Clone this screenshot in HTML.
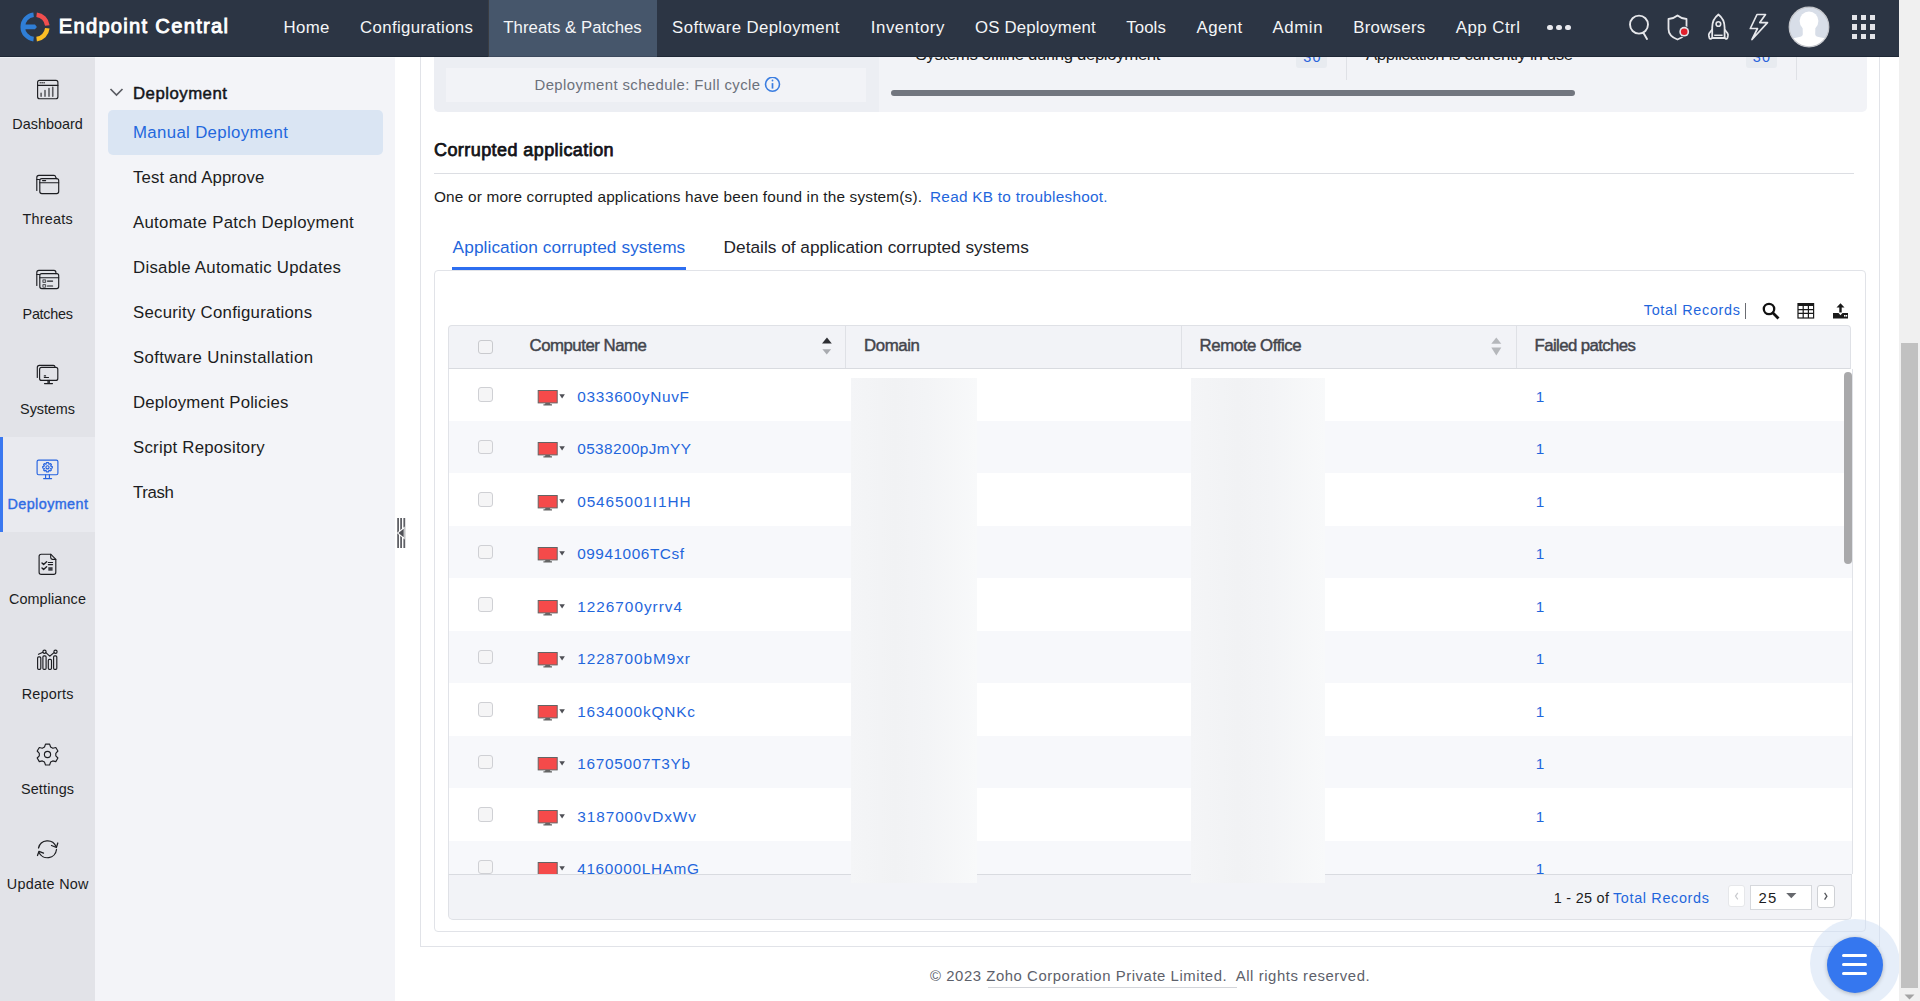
<!DOCTYPE html>
<html><head><meta charset="utf-8"><title>Endpoint Central</title>
<style>
html,body{margin:0;padding:0;width:1920px;height:1001px;overflow:hidden;background:#fff;}
body{position:relative;font-family:"Liberation Sans",sans-serif;}
div{position:absolute;box-sizing:border-box;}
.t{white-space:nowrap;}
</style></head><body>
<div style="left:0px;top:57px;width:95px;height:944px;background:#e2e3e8;"></div>
<div style="left:0px;top:57px;width:95px;height:1px;background:#eceef2;"></div>
<div style="left:0px;top:437px;width:95px;height:95px;background:#e9eaef;"></div>
<div style="left:0px;top:437px;width:3px;height:95px;background:#3a78f0;"></div>
<div class="t" style="left:12.30px;top:117.00px;font-size:14.4px;line-height:14.4px;font-weight:normal;color:#1b1c21;letter-spacing:0.019px;">Dashboard</div>
<div class="t" style="left:22.60px;top:212.00px;font-size:14.4px;line-height:14.4px;font-weight:normal;color:#1b1c21;letter-spacing:0.200px;">Threats</div>
<div class="t" style="left:22.60px;top:307.00px;font-size:14.4px;line-height:14.4px;font-weight:normal;color:#1b1c21;letter-spacing:-0.292px;">Patches</div>
<div class="t" style="left:20.10px;top:402.00px;font-size:14.4px;line-height:14.4px;font-weight:normal;color:#1b1c21;letter-spacing:-0.067px;">Systems</div>
<div class="t" style="left:7.50px;top:497.00px;font-size:14.4px;line-height:14.4px;font-weight:normal;color:#2f6ce4;letter-spacing:0.406px;-webkit-text-stroke:0.4px #2f6ce4;">Deployment</div>
<div class="t" style="left:8.90px;top:592.00px;font-size:14.4px;line-height:14.4px;font-weight:normal;color:#1b1c21;letter-spacing:0.117px;">Compliance</div>
<div class="t" style="left:21.70px;top:687.00px;font-size:14.4px;line-height:14.4px;font-weight:normal;color:#1b1c21;letter-spacing:0.217px;">Reports</div>
<div class="t" style="left:20.90px;top:782.00px;font-size:14.4px;line-height:14.4px;font-weight:normal;color:#1b1c21;letter-spacing:0.164px;">Settings</div>
<div class="t" style="left:6.80px;top:877.00px;font-size:14.4px;line-height:14.4px;font-weight:normal;color:#1b1c21;letter-spacing:0.278px;">Update Now</div>
<svg style="position:absolute;left:32px;top:75px;" width="31" height="28" viewBox="0 0 31 28"><g fill="none" stroke="#1d1e22" stroke-width="1.15" stroke-linecap="round" stroke-linejoin="round"><rect x="5.6" y="5.4" width="20.3" height="18.3" rx="2"/><path d="M5.6 10.3 H25.9"/>
<path d="M8 7.8 H9.3 M10.4 7.8 H11 M12 7.8 H12.6" stroke-width="1"/>
<path d="M9.1 21.2 V18.3 M13 21.2 V15.5 M17 21.2 V13.5 M20.75 21.2 V12.4" stroke="#5c5d62" stroke-width="1.6"/></g></svg>
<svg style="position:absolute;left:32px;top:170px;" width="31" height="28" viewBox="0 0 31 28"><g fill="none" stroke="#1d1e22" stroke-width="1.15" stroke-linecap="round" stroke-linejoin="round"><path d="M4.8 20.5 V7.5 Q4.8 5.4 6.9 5.4 H22 Q23.3 5.4 23.8 7.3 L24.3 8.6"/>
<path d="M4.8 9.5 H7.5"/>
<rect x="7.8" y="8.6" width="18.9" height="15" rx="2"/><path d="M7.8 12.7 H26.7"/><path d="M10.6 10.6 H13.6" stroke-width="1.2"/></g></svg>
<svg style="position:absolute;left:32px;top:265px;" width="31" height="28" viewBox="0 0 31 28"><g fill="none" stroke="#1d1e22" stroke-width="1.15" stroke-linecap="round" stroke-linejoin="round"><path d="M4.8 20.5 V7.5 Q4.8 5.4 6.9 5.4 H22 Q23.9 5.4 23.9 7.5 V8.6"/>
<path d="M4.8 9.5 H7.5"/>
<rect x="7.8" y="8.6" width="18.9" height="15" rx="2"/><path d="M7.8 12.7 H26.7"/>
<rect x="10.9" y="14.8" width="2.7" height="2.6" rx="0.5" stroke="#5c5d62"/><rect x="10.9" y="19.6" width="2.7" height="2.6" rx="0.5" stroke="#5c5d62"/>
<path d="M15.5 16.1 H20.6 M15.5 21 H20.6"/></g></svg>
<svg style="position:absolute;left:32px;top:360px;" width="31" height="28" viewBox="0 0 31 28"><g fill="none" stroke="#1d1e22" stroke-width="1.15" stroke-linecap="round" stroke-linejoin="round"><path d="M5.3 17.5 V7.4 Q5.3 5.3 7.4 5.3 H21.4 Q22.9 5.3 23 7"/>
<rect x="7.6" y="7.4" width="18.2" height="13" rx="2"/>
<path d="M12.3 15.9 H13.6 M12.3 17.5 H16.5"/>
<path d="M16 20.4 V23.3 M17.3 20.4 V23.3 M12.5 23.6 H20.5" /></g></svg>
<svg style="position:absolute;left:32px;top:455px;" width="31" height="28" viewBox="0 0 31 28"><g fill="none" stroke="#2563e0" stroke-width="1.15" stroke-linecap="round" stroke-linejoin="round"><rect x="5.1" y="5.1" width="20.8" height="14.6" rx="1.5"/>
<path d="M13.6 19.7 V23.5 M17.4 19.7 V23.5 M11.6 23.6 H19.6"/>
<path d="M15.5 7.6 L16.6 7.6 L17 9.3 L18.6 8.6 L19.4 9.5 L18.6 11 L20.3 11.6 L20.3 13 L18.6 13.5 L19.4 15.1 L18.5 15.9 L17 15.2 L16.6 16.9 L14.4 16.9 L14 15.2 L12.4 15.9 L11.6 15.1 L12.4 13.5 L10.7 13 L10.7 11.6 L12.4 11 L11.6 9.5 L12.4 8.6 L14 9.3 L14.4 7.6 Z"/>
<circle cx="15.5" cy="12.3" r="1.6"/></g></svg>
<svg style="position:absolute;left:32px;top:550px;" width="31" height="28" viewBox="0 0 31 28"><g fill="none" stroke="#1d1e22" stroke-width="1.15" stroke-linecap="round" stroke-linejoin="round"><path d="M9.2 4.2 H18.7 L23.8 9.3 V22.2 Q23.8 24.3 21.7 24.3 H9.2 Q7.1 24.3 7.1 22.2 V6.3 Q7.1 4.2 9.2 4.2 Z"/>
<path d="M18.7 4.2 V7.6 Q18.7 9.3 20.4 9.3 H23.8"/>
<path d="M10 13 L11.6 14.5 L14.6 11.8 M10 18 L11.6 19.5 L14.6 16.8" stroke-width="1.4"/>
<path d="M16.3 12.5 H20.6 M16.3 14.6 H20.6" stroke-width="1.1"/>
<rect x="16.3" y="17.2" width="4.3" height="3.5" fill="#3d3e44" stroke="none"/></g></svg>
<svg style="position:absolute;left:32px;top:645px;" width="31" height="28" viewBox="0 0 31 28"><g fill="none" stroke="#1d1e22" stroke-width="1.15" stroke-linecap="round" stroke-linejoin="round"><rect x="5.6" y="11.8" width="3.2" height="12.5" rx="1.1"/><rect x="10.9" y="10.8" width="3.2" height="13.5" rx="1.1"/>
<rect x="16.3" y="14.4" width="3.2" height="9.9" rx="1.1"/><rect x="21.6" y="10.8" width="3.2" height="13.5" rx="1.1"/>
<path d="M6.5 9.3 L10.9 7.3 M13.9 7.7 L17.7 11.2 L22 7.6"/>
<circle cx="12.5" cy="6.7" r="1.6"/><circle cx="23.5" cy="6.7" r="1.6"/></g></svg>
<svg style="position:absolute;left:32px;top:740px;" width="31" height="28" viewBox="0 0 31 28"><g fill="none" stroke="#1d1e22" stroke-width="1.15" stroke-linecap="round" stroke-linejoin="round"><path d="M13.5 4.1 H17.6 L18.6 7 L20.8 8.2 L23.8 7.5 L25.9 11 L23.8 13.3 V15.8 L25.9 18 L23.8 21.6 L20.8 20.9 L18.6 22.1 L17.6 25 H13.5 L12.5 22.1 L10.3 20.9 L7.3 21.6 L5.2 18 L7.3 15.8 V13.3 L5.2 11 L7.3 7.5 L10.3 8.2 L12.5 7 Z"/>
<circle cx="15.5" cy="14.5" r="3.1"/></g></svg>
<svg style="position:absolute;left:32px;top:835px;" width="31" height="28" viewBox="0 0 31 28"><g fill="none" stroke="#1d1e22" stroke-width="1.15" stroke-linecap="round" stroke-linejoin="round"><path d="M6.5 13 A9.2 9.2 0 0 1 24 11.6" stroke-width="1.25"/><path d="M24.5 14.5 A9.2 9.2 0 0 1 7 17.4" stroke-width="1.25"/>
<path d="M19.5 10.5 L24.4 12.5 L25.8 8" stroke-width="1.25"/><path d="M11.5 18.2 L7 16.3 L5.5 20.5" stroke-width="1.25"/></g></svg>
<div style="left:95px;top:57px;width:300px;height:944px;background:#f3f4f8;"></div>
<div style="left:95px;top:57px;width:300px;height:1px;background:#fafbfc;"></div>
<svg style="position:absolute;left:108px;top:86px;" width="18" height="12" viewBox="0 0 18 12"><path d="M2.5 3 L8.5 9 L14.5 3" fill="none" stroke="#5a5c63" stroke-width="1.7"/></svg>
<div class="t" style="left:133.00px;top:86.00px;font-size:16.8px;line-height:16.8px;font-weight:normal;color:#15161a;letter-spacing:0.483px;-webkit-text-stroke:0.5px #15161a;">Deployment</div>
<div style="left:108px;top:110px;width:275px;height:45px;background:#dae5f3;border-radius:5px;"></div>
<div class="t" style="left:133.00px;top:125.00px;font-size:16.8px;line-height:16.8px;font-weight:normal;color:#2468dd;letter-spacing:0.350px;">Manual Deployment</div>
<div class="t" style="left:133.00px;top:170.00px;font-size:16.8px;line-height:16.8px;font-weight:normal;color:#1b1c21;letter-spacing:0.110px;">Test and Approve</div>
<div class="t" style="left:133.00px;top:215.00px;font-size:16.8px;line-height:16.8px;font-weight:normal;color:#1b1c21;letter-spacing:0.298px;">Automate Patch Deployment</div>
<div class="t" style="left:133.00px;top:260.00px;font-size:16.8px;line-height:16.8px;font-weight:normal;color:#1b1c21;letter-spacing:0.271px;">Disable Automatic Updates</div>
<div class="t" style="left:133.00px;top:305.00px;font-size:16.8px;line-height:16.8px;font-weight:normal;color:#1b1c21;letter-spacing:0.255px;">Security Configurations</div>
<div class="t" style="left:133.00px;top:350.00px;font-size:16.8px;line-height:16.8px;font-weight:normal;color:#1b1c21;letter-spacing:0.380px;">Software Uninstallation</div>
<div class="t" style="left:133.00px;top:395.00px;font-size:16.8px;line-height:16.8px;font-weight:normal;color:#1b1c21;letter-spacing:0.189px;">Deployment Policies</div>
<div class="t" style="left:133.00px;top:440.00px;font-size:16.8px;line-height:16.8px;font-weight:normal;color:#1b1c21;letter-spacing:0.244px;">Script Repository</div>
<div class="t" style="left:133.00px;top:485.00px;font-size:16.8px;line-height:16.8px;font-weight:normal;color:#1b1c21;letter-spacing:-0.350px;">Trash</div>
<div style="left:395px;top:57px;width:1504px;height:944px;background:#ffffff;"></div>
<svg style="position:absolute;left:395px;top:515px;" width="14" height="36" viewBox="0 0 14 36"><rect x="2.2" y="3" width="1.8" height="30" fill="#5f6066"/><rect x="5.2" y="3" width="1.8" height="30" fill="#5f6066"/><rect x="8.4" y="3" width="1.8" height="30" fill="#5f6066"/>
<path d="M1.8 18 L9.6 11.5 V24.5 Z" fill="#ffffff"/><path d="M3.4 18 L8.7 13.8 V22.2 Z" fill="#505157"/></svg>
<div style="left:420px;top:57px;width:1px;height:890px;background:#e1e3e8;"></div>
<div style="left:1879px;top:57px;width:1px;height:890px;background:#e1e3e8;"></div>
<div style="left:420px;top:946px;width:1460px;height:1px;background:#e1e3e8;"></div>
<div style="left:434px;top:57px;width:1432.5px;height:54.5px;background:#f2f3f7;border-radius:0 0 5px 5px;"></div>
<div style="left:434px;top:57px;width:445px;height:54.5px;background:#eceef3;border-radius:0 0 0 5px;"></div>
<div style="left:446px;top:67.8px;width:420px;height:34.7px;background:#f2f3f7;"></div>
<div class="t" style="left:534.50px;top:78.00px;font-size:14.88px;line-height:14.88px;font-weight:normal;color:#6c717b;letter-spacing:0.405px;">Deployment schedule: Full cycle</div>
<svg style="position:absolute;left:763px;top:77px;" width="18" height="16" viewBox="0 0 18 16"><circle cx="9.5" cy="7.3" r="7" fill="none" stroke="#3a7de0" stroke-width="1.6"/><path d="M9.5 6.1 V11.6" stroke="#3a7de0" stroke-width="1.7"/><circle cx="9.5" cy="3.5" r="0.9" fill="#3a7de0"/></svg>
<div style="left:1296px;top:50px;width:31px;height:17.5px;background:#e8ebf0;border-radius:3px;"></div>
<div style="left:1745.8px;top:50px;width:31px;height:17.5px;background:#e8ebf0;border-radius:3px;"></div>
<div style="left:1346px;top:57px;width:1px;height:23px;background:#dfe1e6;"></div>
<div style="left:1796px;top:57px;width:1px;height:23px;background:#dfe1e6;"></div>
<div style="left:890.6px;top:89.8px;width:684.2px;height:6.2px;background:#72767f;border-radius:3.1px;"></div>
<div class="t" style="left:915.60px;top:47.00px;font-size:16.8px;line-height:16.8px;font-weight:normal;color:#1b1c21;letter-spacing:-0.353px;">Systems offline during deployment</div>
<div class="t" style="left:1303.20px;top:50.00px;font-size:14.4px;line-height:14.4px;font-weight:normal;color:#2a64dc;letter-spacing:1.200px;">30</div>
<div class="t" style="left:1366.00px;top:47.00px;font-size:16.8px;line-height:16.8px;font-weight:normal;color:#1b1c21;letter-spacing:-0.340px;">Application is currently in use</div>
<div class="t" style="left:1752.80px;top:50.00px;font-size:14.4px;line-height:14.4px;font-weight:normal;color:#2a64dc;letter-spacing:1.200px;">30</div>
<div class="t" style="left:434.00px;top:141.00px;font-size:18.0px;line-height:18.0px;font-weight:normal;color:#121317;letter-spacing:0.425px;-webkit-text-stroke:0.75px #121317;">Corrupted application</div>
<div style="left:434px;top:173px;width:1420px;height:1.2px;background:#dcdee3;"></div>
<div class="t" style="left:434.00px;top:189.00px;font-size:15.36px;line-height:15.36px;font-weight:normal;color:#1b1c21;letter-spacing:0.173px;">One or more corrupted applications have been found in the system(s).</div>
<div class="t" style="left:930.00px;top:189.00px;font-size:15.36px;line-height:15.36px;font-weight:normal;color:#1f66dc;letter-spacing:0.260px;">Read KB to troubleshoot.</div>
<div class="t" style="left:452.60px;top:239.00px;font-size:17.28px;line-height:17.28px;font-weight:normal;color:#1f66dc;letter-spacing:0.083px;">Application corrupted systems</div>
<div class="t" style="left:723.60px;top:239.00px;font-size:17.28px;line-height:17.28px;font-weight:normal;color:#222328;letter-spacing:0.000px;">Details of application corrupted systems</div>
<div style="left:434px;top:269.8px;width:1432px;height:662.7px;border:1px solid #e1e3e8;border-radius:4px;background:#fff"></div>
<div style="left:452px;top:267.2px;width:234px;height:2.8px;background:#2d6ef0;"></div>
<div class="t" style="left:1643.75px;top:303.00px;font-size:14.4px;line-height:14.4px;font-weight:normal;color:#1f66dc;letter-spacing:0.683px;">Total Records</div>
<div style="left:1745px;top:303px;width:1.3px;height:15.5px;background:#6a6c72;"></div>
<svg style="position:absolute;left:1758px;top:298px;" width="96" height="24" viewBox="0 0 96 24">
<circle cx="11" cy="11" r="5.2" fill="none" stroke="#111" stroke-width="2.3"/>
<path d="M15 15 L19.5 19.5" stroke="#111" stroke-width="2.8" stroke-linecap="square"/>
<rect x="40" y="5.6" width="15.6" height="14.4" fill="none" stroke="#1a1a1a" stroke-width="1.2"/>
<rect x="40" y="5" width="15.6" height="3" fill="#1a1a1a"/>
<path d="M40 11.7 H55.6 M40 15.3 H55.6 M45.2 5 V20 M50.4 5 V20" stroke="#1a1a1a" stroke-width="1.2"/>
<path d="M82.5 5.3 L78.5 9.5 H81.3 V14.4 H83.7 V9.5 H86.5 Z" fill="#1a1a1a"/>
<path d="M75 15 H80.5 L82.5 17.3 L84.5 15 H90 V20.4 H75 Z" fill="#1a1a1a"/>
<rect x="86" y="17" width="1.6" height="1.6" fill="#fff"/><rect x="88" y="17" width="1.2" height="1.6" fill="#fff"/>
</svg>
<div style="left:447.5px;top:325px;width:1403.5px;height:43.5px;background:#f2f3f7;border:1px solid #dfe1e6;border-bottom:1px solid #d9dbe0;border-radius:4px 4px 0 0"></div>
<div style="left:845px;top:326px;width:1px;height:42px;background:#dfe1e6;"></div>
<div style="left:1180.5px;top:326px;width:1px;height:42px;background:#dfe1e6;"></div>
<div style="left:1515.5px;top:326px;width:1px;height:42px;background:#dfe1e6;"></div>
<div style="left:478px;top:339.5px;width:14.6px;height:14.8px;border:1px solid #c9cace;border-radius:3px;background:#f4f4f6"></div>
<div class="t" style="left:529.50px;top:338.00px;font-size:16.8px;line-height:16.8px;font-weight:normal;color:#43454c;letter-spacing:-0.479px;-webkit-text-stroke:0.45px #43454c;">Computer Name</div>
<div class="t" style="left:864.00px;top:338.00px;font-size:16.8px;line-height:16.8px;font-weight:normal;color:#43454c;letter-spacing:-0.380px;-webkit-text-stroke:0.45px #43454c;">Domain</div>
<div class="t" style="left:1199.50px;top:338.00px;font-size:16.8px;line-height:16.8px;font-weight:normal;color:#43454c;letter-spacing:-0.400px;-webkit-text-stroke:0.45px #43454c;">Remote Office</div>
<div class="t" style="left:1534.50px;top:338.00px;font-size:16.8px;line-height:16.8px;font-weight:normal;color:#43454c;letter-spacing:-0.596px;-webkit-text-stroke:0.45px #43454c;">Failed patches</div>
<svg style="position:absolute;left:820px;top:336px;" width="14" height="20" viewBox="0 0 14 20"><path d="M6.95 1.6 L11.8 7.4 H2 Z" fill="#2d2e33"/><path d="M2.4 13.3 H11.1 L6.75 18.5 Z" fill="#a9abb0"/></svg>
<svg style="position:absolute;left:1489px;top:336px;" width="14" height="20" viewBox="0 0 14 20"><path d="M7.3 1.5 L12.3 7.8 H2.3 Z" fill="#b5b7bb"/><path d="M2.3 11.5 H12.3 L7.3 19.5 Z" fill="#b5b7bb"/></svg>
<div style="left:447.5px;top:368.5px;width:1405.5px;height:505.5px;overflow:hidden;border-left:1px solid #e1e3e8;border-right:1px solid #e1e3e8">
<div style="left:0;top:-0.5px;width:1404px;height:52.5px;background:#ffffff"></div>
<div style="left:29.5px;top:18.5px;width:14.6px;height:14.8px;border:1px solid #cfd0d4;border-radius:3px;background:#f5f5f6"></div>
<svg style="position:absolute;left:88.5px;top:21.0px" width="22" height="16" viewBox="0 0 22 16"><rect x="1.2" y="0.5" width="19" height="12.4" fill="#f54a4a" stroke="#646464" stroke-width="1"/><path d="M8.6 12.9 H12.8 L13.6 14.3 H15 V15.4 H6.4 V14.3 H7.8 Z" fill="#646464"/></svg>
<svg style="position:absolute;left:110.8px;top:25.0px" width="7" height="6" viewBox="0 0 7 6"><path d="M0.3 0.2 H5.9 L3.1 4.6 Z" fill="#4e4f55"/></svg>
<div style="left:0;top:52.0px;width:1404px;height:52.5px;background:#f7f8fb"></div>
<div style="left:29.5px;top:71.0px;width:14.6px;height:14.8px;border:1px solid #cfd0d4;border-radius:3px;background:#f5f5f6"></div>
<svg style="position:absolute;left:88.5px;top:73.5px" width="22" height="16" viewBox="0 0 22 16"><rect x="1.2" y="0.5" width="19" height="12.4" fill="#f54a4a" stroke="#646464" stroke-width="1"/><path d="M8.6 12.9 H12.8 L13.6 14.3 H15 V15.4 H6.4 V14.3 H7.8 Z" fill="#646464"/></svg>
<svg style="position:absolute;left:110.8px;top:77.5px" width="7" height="6" viewBox="0 0 7 6"><path d="M0.3 0.2 H5.9 L3.1 4.6 Z" fill="#4e4f55"/></svg>
<div style="left:0;top:104.5px;width:1404px;height:52.5px;background:#ffffff"></div>
<div style="left:29.5px;top:123.5px;width:14.6px;height:14.8px;border:1px solid #cfd0d4;border-radius:3px;background:#f5f5f6"></div>
<svg style="position:absolute;left:88.5px;top:126.0px" width="22" height="16" viewBox="0 0 22 16"><rect x="1.2" y="0.5" width="19" height="12.4" fill="#f54a4a" stroke="#646464" stroke-width="1"/><path d="M8.6 12.9 H12.8 L13.6 14.3 H15 V15.4 H6.4 V14.3 H7.8 Z" fill="#646464"/></svg>
<svg style="position:absolute;left:110.8px;top:130.0px" width="7" height="6" viewBox="0 0 7 6"><path d="M0.3 0.2 H5.9 L3.1 4.6 Z" fill="#4e4f55"/></svg>
<div style="left:0;top:157.0px;width:1404px;height:52.5px;background:#f7f8fb"></div>
<div style="left:29.5px;top:176.0px;width:14.6px;height:14.8px;border:1px solid #cfd0d4;border-radius:3px;background:#f5f5f6"></div>
<svg style="position:absolute;left:88.5px;top:178.5px" width="22" height="16" viewBox="0 0 22 16"><rect x="1.2" y="0.5" width="19" height="12.4" fill="#f54a4a" stroke="#646464" stroke-width="1"/><path d="M8.6 12.9 H12.8 L13.6 14.3 H15 V15.4 H6.4 V14.3 H7.8 Z" fill="#646464"/></svg>
<svg style="position:absolute;left:110.8px;top:182.5px" width="7" height="6" viewBox="0 0 7 6"><path d="M0.3 0.2 H5.9 L3.1 4.6 Z" fill="#4e4f55"/></svg>
<div style="left:0;top:209.5px;width:1404px;height:52.5px;background:#ffffff"></div>
<div style="left:29.5px;top:228.5px;width:14.6px;height:14.8px;border:1px solid #cfd0d4;border-radius:3px;background:#f5f5f6"></div>
<svg style="position:absolute;left:88.5px;top:231.0px" width="22" height="16" viewBox="0 0 22 16"><rect x="1.2" y="0.5" width="19" height="12.4" fill="#f54a4a" stroke="#646464" stroke-width="1"/><path d="M8.6 12.9 H12.8 L13.6 14.3 H15 V15.4 H6.4 V14.3 H7.8 Z" fill="#646464"/></svg>
<svg style="position:absolute;left:110.8px;top:235.0px" width="7" height="6" viewBox="0 0 7 6"><path d="M0.3 0.2 H5.9 L3.1 4.6 Z" fill="#4e4f55"/></svg>
<div style="left:0;top:262.0px;width:1404px;height:52.5px;background:#f7f8fb"></div>
<div style="left:29.5px;top:281.0px;width:14.6px;height:14.8px;border:1px solid #cfd0d4;border-radius:3px;background:#f5f5f6"></div>
<svg style="position:absolute;left:88.5px;top:283.5px" width="22" height="16" viewBox="0 0 22 16"><rect x="1.2" y="0.5" width="19" height="12.4" fill="#f54a4a" stroke="#646464" stroke-width="1"/><path d="M8.6 12.9 H12.8 L13.6 14.3 H15 V15.4 H6.4 V14.3 H7.8 Z" fill="#646464"/></svg>
<svg style="position:absolute;left:110.8px;top:287.5px" width="7" height="6" viewBox="0 0 7 6"><path d="M0.3 0.2 H5.9 L3.1 4.6 Z" fill="#4e4f55"/></svg>
<div style="left:0;top:314.5px;width:1404px;height:52.5px;background:#ffffff"></div>
<div style="left:29.5px;top:333.5px;width:14.6px;height:14.8px;border:1px solid #cfd0d4;border-radius:3px;background:#f5f5f6"></div>
<svg style="position:absolute;left:88.5px;top:336.0px" width="22" height="16" viewBox="0 0 22 16"><rect x="1.2" y="0.5" width="19" height="12.4" fill="#f54a4a" stroke="#646464" stroke-width="1"/><path d="M8.6 12.9 H12.8 L13.6 14.3 H15 V15.4 H6.4 V14.3 H7.8 Z" fill="#646464"/></svg>
<svg style="position:absolute;left:110.8px;top:340.0px" width="7" height="6" viewBox="0 0 7 6"><path d="M0.3 0.2 H5.9 L3.1 4.6 Z" fill="#4e4f55"/></svg>
<div style="left:0;top:367.0px;width:1404px;height:52.5px;background:#f7f8fb"></div>
<div style="left:29.5px;top:386.0px;width:14.6px;height:14.8px;border:1px solid #cfd0d4;border-radius:3px;background:#f5f5f6"></div>
<svg style="position:absolute;left:88.5px;top:388.5px" width="22" height="16" viewBox="0 0 22 16"><rect x="1.2" y="0.5" width="19" height="12.4" fill="#f54a4a" stroke="#646464" stroke-width="1"/><path d="M8.6 12.9 H12.8 L13.6 14.3 H15 V15.4 H6.4 V14.3 H7.8 Z" fill="#646464"/></svg>
<svg style="position:absolute;left:110.8px;top:392.5px" width="7" height="6" viewBox="0 0 7 6"><path d="M0.3 0.2 H5.9 L3.1 4.6 Z" fill="#4e4f55"/></svg>
<div style="left:0;top:419.5px;width:1404px;height:52.5px;background:#ffffff"></div>
<div style="left:29.5px;top:438.5px;width:14.6px;height:14.8px;border:1px solid #cfd0d4;border-radius:3px;background:#f5f5f6"></div>
<svg style="position:absolute;left:88.5px;top:441.0px" width="22" height="16" viewBox="0 0 22 16"><rect x="1.2" y="0.5" width="19" height="12.4" fill="#f54a4a" stroke="#646464" stroke-width="1"/><path d="M8.6 12.9 H12.8 L13.6 14.3 H15 V15.4 H6.4 V14.3 H7.8 Z" fill="#646464"/></svg>
<svg style="position:absolute;left:110.8px;top:445.0px" width="7" height="6" viewBox="0 0 7 6"><path d="M0.3 0.2 H5.9 L3.1 4.6 Z" fill="#4e4f55"/></svg>
<div style="left:0;top:472.0px;width:1404px;height:52.5px;background:#f7f8fb"></div>
<div style="left:29.5px;top:491.0px;width:14.6px;height:14.8px;border:1px solid #cfd0d4;border-radius:3px;background:#f5f5f6"></div>
<svg style="position:absolute;left:88.5px;top:493.5px" width="22" height="16" viewBox="0 0 22 16"><rect x="1.2" y="0.5" width="19" height="12.4" fill="#f54a4a" stroke="#646464" stroke-width="1"/><path d="M8.6 12.9 H12.8 L13.6 14.3 H15 V15.4 H6.4 V14.3 H7.8 Z" fill="#646464"/></svg>
<svg style="position:absolute;left:110.8px;top:497.5px" width="7" height="6" viewBox="0 0 7 6"><path d="M0.3 0.2 H5.9 L3.1 4.6 Z" fill="#4e4f55"/></svg>
</div>
<div class="t" style="left:577.20px;top:389.00px;font-size:15.36px;line-height:15.36px;font-weight:normal;color:#1f66dc;letter-spacing:0.694px;">0333600yNuvF</div>
<div class="t" style="left:1535.75px;top:389.00px;font-size:15.36px;line-height:15.36px;font-weight:normal;color:#1f66dc;letter-spacing:0.000px;">1</div>
<div class="t" style="left:577.20px;top:441.00px;font-size:15.36px;line-height:15.36px;font-weight:normal;color:#1f66dc;letter-spacing:0.407px;">0538200pJmYY</div>
<div class="t" style="left:1535.75px;top:441.00px;font-size:15.36px;line-height:15.36px;font-weight:normal;color:#1f66dc;letter-spacing:0.000px;">1</div>
<div class="t" style="left:577.20px;top:494.00px;font-size:15.36px;line-height:15.36px;font-weight:normal;color:#1f66dc;letter-spacing:0.908px;">05465001I1HH</div>
<div class="t" style="left:1535.75px;top:494.00px;font-size:15.36px;line-height:15.36px;font-weight:normal;color:#1f66dc;letter-spacing:0.000px;">1</div>
<div class="t" style="left:577.20px;top:546.00px;font-size:15.36px;line-height:15.36px;font-weight:normal;color:#1f66dc;letter-spacing:0.544px;">09941006TCsf</div>
<div class="t" style="left:1535.75px;top:546.00px;font-size:15.36px;line-height:15.36px;font-weight:normal;color:#1f66dc;letter-spacing:0.000px;">1</div>
<div class="t" style="left:577.20px;top:599.00px;font-size:15.36px;line-height:15.36px;font-weight:normal;color:#1f66dc;letter-spacing:0.990px;">1226700yrrv4</div>
<div class="t" style="left:1535.75px;top:599.00px;font-size:15.36px;line-height:15.36px;font-weight:normal;color:#1f66dc;letter-spacing:0.000px;">1</div>
<div class="t" style="left:577.20px;top:651.00px;font-size:15.36px;line-height:15.36px;font-weight:normal;color:#1f66dc;letter-spacing:0.939px;">1228700bM9xr</div>
<div class="t" style="left:1535.75px;top:651.00px;font-size:15.36px;line-height:15.36px;font-weight:normal;color:#1f66dc;letter-spacing:0.000px;">1</div>
<div class="t" style="left:577.20px;top:704.00px;font-size:15.36px;line-height:15.36px;font-weight:normal;color:#1f66dc;letter-spacing:0.853px;">1634000kQNKc</div>
<div class="t" style="left:1535.75px;top:704.00px;font-size:15.36px;line-height:15.36px;font-weight:normal;color:#1f66dc;letter-spacing:0.000px;">1</div>
<div class="t" style="left:577.20px;top:756.00px;font-size:15.36px;line-height:15.36px;font-weight:normal;color:#1f66dc;letter-spacing:0.703px;">16705007T3Yb</div>
<div class="t" style="left:1535.75px;top:756.00px;font-size:15.36px;line-height:15.36px;font-weight:normal;color:#1f66dc;letter-spacing:0.000px;">1</div>
<div class="t" style="left:577.20px;top:809.00px;font-size:15.36px;line-height:15.36px;font-weight:normal;color:#1f66dc;letter-spacing:0.944px;">3187000vDxWv</div>
<div class="t" style="left:1535.75px;top:809.00px;font-size:15.36px;line-height:15.36px;font-weight:normal;color:#1f66dc;letter-spacing:0.000px;">1</div>
<div class="t" style="left:577.20px;top:861.00px;font-size:15.36px;line-height:15.36px;font-weight:normal;color:#1f66dc;letter-spacing:0.671px;">4160000LHAmG</div>
<div class="t" style="left:1535.75px;top:861.00px;font-size:15.36px;line-height:15.36px;font-weight:normal;color:#1f66dc;letter-spacing:0.000px;">1</div>
<div style="left:1843.5px;top:372px;width:8.5px;height:191.5px;background:#a9a9ab;border-radius:4.25px;"></div>
<div style="left:447.5px;top:874px;width:1404.5px;height:45.5px;background:#f2f3f7;border:1px solid #dfe1e6;border-top:1px solid #d9dbe0;border-radius:0 0 5px 5px"></div>
<div class="t" style="left:1553.75px;top:891.00px;font-size:14.4px;line-height:14.4px;font-weight:normal;color:#1b1c21;letter-spacing:0.294px;">1 - 25 of</div>
<div class="t" style="left:1613.00px;top:891.00px;font-size:14.4px;line-height:14.4px;font-weight:normal;color:#1f66dc;letter-spacing:0.663px;">Total Records</div>
<div style="left:1727.5px;top:885.3px;width:17.2px;height:22.2px;border:1px solid #e6e7ea;border-radius:3px;background:#fff"></div>
<div style="left:1750.4px;top:884.6px;width:61.2px;height:25.2px;border:1px solid #d6d8dc;background:#fff"></div>
<div class="t" style="left:1758.40px;top:891.00px;font-size:14.88px;line-height:14.88px;font-weight:normal;color:#1b1c21;letter-spacing:1.372px;">25</div>
<svg style="position:absolute;left:1785px;top:892px;" width="13" height="8" viewBox="0 0 13 8"><path d="M1.2 1 H11.4 L6.3 6.2 Z" fill="#66686d"/></svg>
<div style="left:1817.3px;top:885.3px;width:17.4px;height:22.4px;border:1px solid #cfd1d5;border-radius:3px;background:#fff"></div>
<svg style="position:absolute;left:1727.5px;top:885.3px;" width="17.2" height="22.2" viewBox="0 0 17.2 22.2"><path d="M9.8 7.8 L7.5 11.1 L9.8 14.4" fill="none" stroke="#c9cace" stroke-width="1.2"/></svg>
<svg style="position:absolute;left:1817.3px;top:885.3px;" width="17.4" height="22.4" viewBox="0 0 17.4 22.4"><path d="M7.6 7.8 L9.9 11.2 L7.6 14.6" fill="none" stroke="#55575c" stroke-width="1.3"/></svg>
<div style="left:851px;top:377.8px;width:126px;height:505px;background:linear-gradient(90deg,#f4f5f7 0%,#f1f2f4 35%,#f3f4f6 60%,#f8f9fa 100%)"></div>
<div style="left:1190.5px;top:377.8px;width:134.0px;height:505px;background:linear-gradient(90deg,#f4f5f7 0%,#f1f2f4 35%,#f3f4f6 60%,#f8f9fa 100%)"></div>
<div class="t" style="left:930.00px;top:969.00px;font-size:14.88px;line-height:14.88px;font-weight:normal;color:#5d616b;letter-spacing:0.562px;white-space:pre;">© 2023 Zoho Corporation Private Limited.  All rights reserved.</div>
<div style="left:988px;top:987px;width:249px;height:1px;background:#d3d5da;"></div>
<div style="left:1810.3px;top:918.7px;width:89.4px;height:89.4px;border-radius:50%;background:rgba(210,224,244,0.55)"></div>
<div style="left:1827px;top:936.8px;width:56px;height:56px;border-radius:50%;background:#3577ef;box-shadow:0 1px 4px rgba(0,0,0,0.25)"></div>
<div style="left:1842px;top:954.1px;width:25px;height:3px;background:#ffffff;border-radius:1.5px;"></div>
<div style="left:1842px;top:962.9px;width:25px;height:3px;background:#ffffff;border-radius:1.5px;"></div>
<div style="left:1842px;top:971.6px;width:25px;height:3px;background:#ffffff;border-radius:1.5px;"></div>
<div style="left:1899px;top:0px;width:21px;height:1001px;background:#f0f0f0;"></div>
<div style="left:1901.2px;top:343px;width:16.8px;height:644.6px;background:#c1c1c1;"></div>
<svg style="position:absolute;left:1899px;top:990px;" width="21" height="11" viewBox="0 0 21 11"><path d="M5.5 4.5 H15.5 L10.5 9.5 Z" fill="#a3a3a3"/></svg>
<div style="left:0px;top:0px;width:1899px;height:57px;background:#2c3544;"></div>
<div style="left:0px;top:56px;width:1899px;height:1px;background:#1f2836;"></div>
<div style="left:488.75px;top:0px;width:167.75px;height:57px;background:#46566b;"></div>
<div style="left:488.75px;top:56px;width:167.75px;height:1px;background:#3d4a5e;"></div>
<div style="left:488px;top:0px;width:1px;height:57px;background:#3a3d43;"></div>
<svg style="position:absolute;left:18px;top:10px;" width="36" height="36" viewBox="0 0 36 36">
<path d="M15.6 4.69 A12.3 12.3 0 0 0 15.6 29.11" fill="none" stroke="#2f7ed6" stroke-width="4.6"/>
<path d="M18.6 4.69 A12.3 12.3 0 0 1 29.32 15.51" fill="none" stroke="#f04e4e" stroke-width="4.6"/>
<path d="M29.32 18.29 A12.3 12.3 0 0 1 18.6 29.11" fill="none" stroke="#fbbd25" stroke-width="4.6"/>
<path d="M6 14.5 H17 L18.9 16.9 L17 19.3 H6 Z" fill="#2f7ed6"/>
</svg>
<div class="t" style="left:58.70px;top:16.00px;font-size:20.16px;line-height:20.16px;font-weight:normal;color:#ffffff;letter-spacing:1.275px;-webkit-text-stroke:0.9px #ffffff;">Endpoint Central</div>
<div class="t" style="left:283.50px;top:20.00px;font-size:16.8px;line-height:16.8px;font-weight:normal;color:#f4f5f7;letter-spacing:0.367px;">Home</div>
<div class="t" style="left:360.00px;top:20.00px;font-size:16.8px;line-height:16.8px;font-weight:normal;color:#f4f5f7;letter-spacing:0.365px;">Configurations</div>
<div class="t" style="left:503.30px;top:20.00px;font-size:16.8px;line-height:16.8px;font-weight:normal;color:#f4f5f7;letter-spacing:0.025px;">Threats &amp; Patches</div>
<div class="t" style="left:672.10px;top:20.00px;font-size:16.8px;line-height:16.8px;font-weight:normal;color:#f4f5f7;letter-spacing:0.383px;">Software Deployment</div>
<div class="t" style="left:870.80px;top:20.00px;font-size:16.8px;line-height:16.8px;font-weight:normal;color:#f4f5f7;letter-spacing:0.563px;">Inventory</div>
<div class="t" style="left:975.00px;top:20.00px;font-size:16.8px;line-height:16.8px;font-weight:normal;color:#f4f5f7;letter-spacing:0.183px;">OS Deployment</div>
<div class="t" style="left:1126.25px;top:20.00px;font-size:16.8px;line-height:16.8px;font-weight:normal;color:#f4f5f7;letter-spacing:0.087px;">Tools</div>
<div class="t" style="left:1196.50px;top:20.00px;font-size:16.8px;line-height:16.8px;font-weight:normal;color:#f4f5f7;letter-spacing:0.475px;">Agent</div>
<div class="t" style="left:1272.50px;top:20.00px;font-size:16.8px;line-height:16.8px;font-weight:normal;color:#f4f5f7;letter-spacing:0.600px;">Admin</div>
<div class="t" style="left:1353.30px;top:20.00px;font-size:16.8px;line-height:16.8px;font-weight:normal;color:#f4f5f7;letter-spacing:0.271px;">Browsers</div>
<div class="t" style="left:1455.80px;top:20.00px;font-size:16.8px;line-height:16.8px;font-weight:normal;color:#f4f5f7;letter-spacing:0.500px;">App Ctrl</div>
<div style="left:1547.4px;top:25px;width:5.2px;height:5.2px;border-radius:50%;background:#e8e9ee"></div>
<div style="left:1556.4px;top:25px;width:5.2px;height:5.2px;border-radius:50%;background:#e8e9ee"></div>
<div style="left:1565.4px;top:25px;width:5.2px;height:5.2px;border-radius:50%;background:#e8e9ee"></div>
<svg style="position:absolute;left:1620px;top:5px;" width="160" height="45" viewBox="0 0 160 45">
<circle cx="19" cy="19.6" r="9" fill="none" stroke="#e6e7eb" stroke-width="1.9"/>
<path d="M23.5 28 L27 34" stroke="#e6e7eb" stroke-width="1.9" stroke-linecap="round"/>
<path d="M57.5 10.5 C54.5 13 51 13.8 48.5 14 V24 C48.5 29.5 52 32.5 57.5 34.5 C63 32.5 66.5 29.5 66.5 24 V14 C64 13.8 60.5 13 57.5 10.5 Z" fill="none" stroke="#e6e7eb" stroke-width="1.8" stroke-linejoin="round"/>
<circle cx="64.2" cy="26.7" r="5.8" fill="#2c3544"/>
<circle cx="64.2" cy="26.7" r="4.9" fill="#e4e5e9"/>
<circle cx="64.2" cy="26.7" r="3.3" fill="#e0202c"/>
<path d="M98.4 9.5 C94.5 12.5 92.2 17 92.2 22.5 V33 H104.6 V22.5 C104.6 17 102.3 12.5 98.4 9.5 Z" fill="none" stroke="#e6e7eb" stroke-width="1.8" stroke-linejoin="round"/>
<circle cx="98.4" cy="19" r="2.3" fill="none" stroke="#e6e7eb" stroke-width="1.6"/>
<path d="M92.2 24.5 L89.3 28.3 Q88.6 29.3 88.9 30.8 L89.4 33 Q89.8 34.2 91 33.8 L92.2 33 M104.6 24.5 L107.5 28.3 Q108.2 29.3 107.9 30.8 L107.4 33 Q107 34.2 105.8 33.8 L104.6 33" fill="none" stroke="#e6e7eb" stroke-width="1.8" stroke-linejoin="round"/>
<path d="M94.2 30.3 H102.6" stroke="#e6e7eb" stroke-width="1.5"/>
<path d="M137 9.5 H145.5 L139.8 17.6 H147.5 L132 34.5 L137.5 23.5 H130.3 Z" fill="none" stroke="#e6e7eb" stroke-width="1.7" stroke-linejoin="round"/>
</svg>
<svg style="position:absolute;left:1788px;top:6px;" width="42" height="42" viewBox="0 0 42 42">
<defs><clipPath id="av"><circle cx="21" cy="21" r="19.6"/></clipPath></defs>
<circle cx="21" cy="21" r="20" fill="#d8dee8"/>
<g clip-path="url(#av)">
<ellipse cx="21" cy="15" rx="9.4" ry="9.6" fill="#ffffff"/>
<path d="M14.6 20 L14.8 28.2 C14.8 30.2 12.5 31 9 31.5 C5 32 2 33 0 36 V42 H42 V36 C40 33 37 32 33 31.5 C29.5 31 27.2 30.2 27.2 28.2 L27.4 20 Z" fill="#ffffff"/>
</g>
<circle cx="21" cy="21" r="19.8" fill="none" stroke="#c4c6cb" stroke-width="1.2"/>
</svg>
<div style="left:1851.8px;top:15.0px;width:5.4px;height:5.4px;background:#e3e4e9"></div>
<div style="left:1860.8px;top:15.0px;width:5.4px;height:5.4px;background:#e3e4e9"></div>
<div style="left:1869.8px;top:15.0px;width:5.4px;height:5.4px;background:#e3e4e9"></div>
<div style="left:1851.8px;top:24.45px;width:5.4px;height:5.4px;background:#e3e4e9"></div>
<div style="left:1860.8px;top:24.45px;width:5.4px;height:5.4px;background:#e3e4e9"></div>
<div style="left:1869.8px;top:24.45px;width:5.4px;height:5.4px;background:#e3e4e9"></div>
<div style="left:1851.8px;top:33.9px;width:5.4px;height:5.4px;background:#e3e4e9"></div>
<div style="left:1860.8px;top:33.9px;width:5.4px;height:5.4px;background:#e3e4e9"></div>
<div style="left:1869.8px;top:33.9px;width:5.4px;height:5.4px;background:#e3e4e9"></div>
</body></html>
